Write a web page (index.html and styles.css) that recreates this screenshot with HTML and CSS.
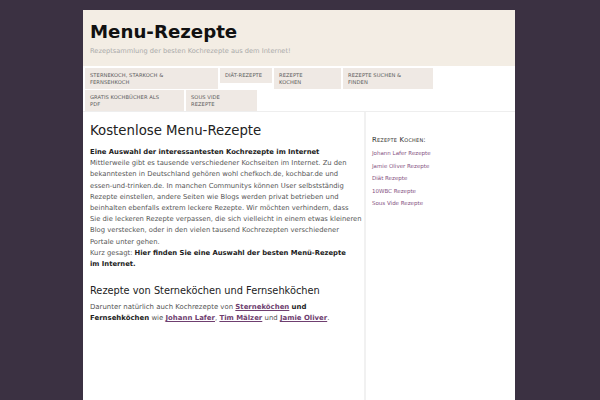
FILE: index.html
```html
<!DOCTYPE html>
<html lang="de">
<head>
<meta charset="utf-8">
<title>Menu-Rezepte</title>
<link rel="stylesheet" href="styles.css">
</head>
<body>
<div class="page">
  <header class="header">
    <h1 class="site-title">Menu-Rezepte</h1>
    <p class="tagline">Rezeptsammlung der besten Kochrezepte aus dem Internet!</p>
  </header>
  <nav class="nav">
    <ul class="menu">
      <li class="tab tab-stern">Sternekoch, Starkoch &amp;<br>Fernsehkoch</li>
      <li class="tab tab-diaet">Diät-Rezepte</li>
      <li class="tab tab-kochen">Rezepte<br>kochen</li>
      <li class="tab tab-suchen">Rezepte suchen &amp;<br>finden</li>
      <li class="tab tab-pdf">Gratis Kochbücher als<br>PDF</li>
      <li class="tab tab-sous">Sous Vide<br>Rezepte</li>
    </ul>
  </nav>
  <div class="main">
    <article class="content">
      <h2 class="title">Kostenlose Menu-Rezepte</h2>
      <p class="text text-lines"><strong>Eine Auswahl der interessantesten Kochrezepte im Internet</strong><br>
      Mittlerweile gibt es tausende verschiedener Kochseiten im Internet. Zu den<br>
      bekanntesten in Deutschland gehören wohl chefkoch.de, kochbar.de und<br>
      essen-und-trinken.de. In manchen Communitys können User selbstständig<br>
      Rezepte einstellen, andere Seiten wie Blogs werden privat betrieben und<br>
      beinhalten ebenfalls extrem leckere Rezepte. Wir möchten verhindern, dass<br>
      Sie die leckeren Rezepte verpassen, die sich vielleicht in einem etwas kleineren<br>
      Blog verstecken, oder in den vielen tausend Kochrezepten verschiedener<br>
      Portale unter gehen.<br>
      Kurz gesagt: <strong>Hier finden Sie eine Auswahl der besten Menü-Rezepte<br>
      im Internet.</strong></p>
      <h3 class="subtitle">Rezepte von Sterneköchen und Fernsehköchen</h3>
      <p class="text text-tight">Darunter natürlich auch Kochrezepte von <a class="link" href="#">Sterneköchen</a> <strong>und Fernsehköchen</strong> wie <a class="link" href="#">Johann Lafer</a>, <a class="link" href="#">Tim Mälzer</a> und <a class="link" href="#">Jamie Oliver</a>.</p>
    </article>
    <aside class="sidebar">
      <h4 class="widget-title">Rezepte Kochen:</h4>
      <ul class="widget-list">
        <li><a href="#">Johann Lafer Rezepte</a></li>
        <li><a href="#">Jamie Oliver Rezepte</a></li>
        <li><a href="#">Diät Rezepte</a></li>
        <li><a href="#">10WBC Rezepte</a></li>
        <li><a href="#">Sous Vide Rezepte</a></li>
      </ul>
    </aside>
  </div>
</div>
</body>
</html>
```

FILE: styles.css
```css
html, body {
  margin: 0;
  padding: 0;
  background: #3b3142;
  height: 100%;
  overflow: hidden;
}
body {
  font-family: "DejaVu Sans", Verdana, sans-serif;
  color: #555;
}
.page {
  width: 432px;
  margin: 10px 0 0 83px;
  background: #fff;
  min-height: 390px;
}
.header {
  background: #f3ede4;
  height: 56px;
  padding: 0 7px;
  box-sizing: border-box;
  overflow: hidden;
}
.site-title {
  margin: 0;
  padding-top: 10px;
  font-size: 18.2px;
  line-height: 24px;
  font-weight: bold;
  color: #111;
}
.tagline {
  margin: 3px 0 0;
  font-size: 6.65px;
  line-height: 9px;
  color: #aaa;
}
.nav {
  padding: 2px 0 0 2px;
  border-bottom: 1px solid #eee;
}
.menu {
  list-style: none;
  margin: 0;
  padding: 0;
  display: flex;
  flex-wrap: wrap;
  align-items: flex-start;
  column-gap: 2px;
  row-gap: 1px;
  width: 352px;
}
.tab {
  background: #efe9e4;
  color: #5a5a5a;
  text-transform: uppercase;
  font-size: 5.2px;
  letter-spacing: 0.05px;
  line-height: 7px;
  padding: 4px 5px 3px;
  box-sizing: border-box;
  height: 21px;
}
.tab-stern { width: 133px; }
.tab-diaet { width: 52px; height: 15px; }
.tab-kochen { width: 67px; }
.tab-suchen { width: 90px; }
.tab-pdf { width: 99px; }
.tab-sous { width: 71px; }
.main {
  display: flex;
  align-items: stretch;
}
.content {
  width: 281px;
  padding: 0 1px 0 7px;
  box-sizing: border-box;
}
.title {
  margin: 11px 0 0;
  font-size: 13.3px;
  line-height: 16px;
  font-weight: normal;
  color: #222;
}
.text {
  margin: 8px 0 0;
  font-size: 6.95px;
  line-height: 11.2px;
  color: #555;
}
.text-lines {
  white-space: nowrap;
  font-size: 6.8px;
}
.text-tight {
  margin-top: 5px;
}
.text strong {
  color: #222;
}
.subtitle {
  margin: 14px 0 0;
  font-size: 9.8px;
  line-height: 13px;
  font-weight: normal;
  color: #222;
}
.link {
  color: #6f3f70;
  font-weight: bold;
  text-decoration: underline;
}
.sidebar {
  flex: 1;
  border-left: 2px solid #f1f1f1;
  padding: 23px 6px 0;
  min-height: 278px;
}
.widget-title {
  margin: 0;
  font-size: 6.9px;
  line-height: 10px;
  font-weight: normal;
  font-variant: small-caps;
  letter-spacing: 0.2px;
  color: #333;
}
.widget-list {
  list-style: none;
  margin: 2px 0 0;
  padding: 0;
}
.widget-list li {
  font-size: 5.5px;
  line-height: 12.5px;
}
.widget-list a {
  color: #85527f;
  text-decoration: none;
}
```
